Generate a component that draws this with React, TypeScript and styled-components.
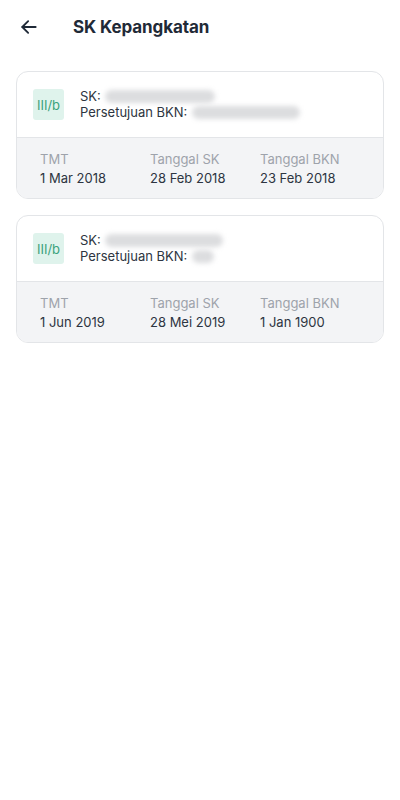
import styled, { createGlobalStyle } from "styled-components";

const GlobalStyle = createGlobalStyle`
  html, body {
    margin: 0;
    padding: 0;
    background: #ffffff;
  }
  body {
    font-family: Inter, "Noto Sans", "Liberation Sans", sans-serif;
    color: #1f2937;
  }
`;

type Entry = {
  sk: number;
  bkn: number;
  tmt: string;
  tanggalSk: string;
  tanggalBkn: string;
};

const entries: Entry[] = [
  { sk: 110, bkn: 108, tmt: "1 Mar 2018", tanggalSk: "28 Feb 2018", tanggalBkn: "23 Feb 2018" },
  { sk: 118, bkn: 22, tmt: "1 Jun 2019", tanggalSk: "28 Mei 2019", tanggalBkn: "1 Jan 1900" },
];

function App() {
  return (
    <Page>
      <GlobalStyle />
      <Header>
        <BackButton aria-label="Kembali">
          <svg width="20" height="20" viewBox="0 0 24 24" fill="none" stroke="#1f2937" strokeWidth="2.2" strokeLinecap="round" strokeLinejoin="round">
            <path d="M20 12H4" />
            <path d="M11 5l-7 7 7 7" />
          </svg>
        </BackButton>
        <Title>SK Kepangkatan</Title>
      </Header>
      <List>
        {entries.map((e, i) => (
          <Card key={i}>
            <CardTop>
              <Badge>III/b</Badge>
              <Info>
                <InfoLine>
                  SK: <Redacted style={{ width: e.sk }} />
                </InfoLine>
                <InfoLine>
                  Persetujuan BKN: <Redacted style={{ width: e.bkn }} />
                </InfoLine>
              </Info>
            </CardTop>
            <CardBottom>
              <Column>
                <Label>TMT</Label>
                <Value>{e.tmt}</Value>
              </Column>
              <Column>
                <Label>Tanggal SK</Label>
                <Value>{e.tanggalSk}</Value>
              </Column>
              <Column>
                <Label>Tanggal BKN</Label>
                <Value>{e.tanggalBkn}</Value>
              </Column>
            </CardBottom>
          </Card>
        ))}
      </List>
    </Page>
  );
}

export default App;

const Page = styled.div`
  width: 400px;
  min-height: 800px;
  background: #ffffff;
`;

const Header = styled.div`
  display: flex;
  align-items: center;
  height: 54px;
  padding: 0 0 0 18px;
`;

const BackButton = styled.div`
  display: flex;
  align-items: center;
  justify-content: center;
  width: 22px;
  height: 22px;
  margin-right: 33px;
`;

const Title = styled.h1`
  margin: 0;
  font-size: 17px;
  font-weight: 700;
  color: #1f2a37;
  letter-spacing: -0.1px;
`;

const List = styled.div`
  display: flex;
  flex-direction: column;
  gap: 16px;
  padding: 17px 16px 0 16px;
`;

const Card = styled.div`
  border: 1px solid #e3e5e8;
  border-radius: 12px;
  overflow: hidden;
  background: #ffffff;
`;

const CardTop = styled.div`
  display: flex;
  align-items: center;
  gap: 16px;
  height: 65px;
  padding: 0 16px;
`;

const Badge = styled.div`
  display: flex;
  align-items: center;
  justify-content: center;
  width: 31px;
  height: 31px;
  border-radius: 3px;
  background: #dff3ec;
  color: #3aa27c;
  font-size: 13px;
  flex-shrink: 0;
`;

const Info = styled.div`
  display: flex;
  flex-direction: column;
  gap: 1px;
`;

const InfoLine = styled.div`
  display: flex;
  align-items: center;
  font-size: 13px;
  line-height: 15px;
  color: #2d3541;
  white-space: pre;
`;

const Redacted = styled.span`
  display: inline-block;
  height: 13px;
  margin-left: 1px;
  border-radius: 7px;
  background: #dcdddf;
  filter: blur(2.5px);
`;

const CardBottom = styled.div`
  display: grid;
  grid-template-columns: 110px 110px 110px;
  padding: 13px 23px 12px 23px;
  background: #f3f4f6;
  border-top: 1px solid #e3e5e8;
`;

const Column = styled.div`
  display: flex;
  flex-direction: column;
  gap: 3px;
`;

const Label = styled.div`
  font-size: 13px;
  line-height: 16px;
  color: #9ea3ab;
`;

const Value = styled.div`
  font-size: 13px;
  line-height: 16px;
  color: #2d3541;
`;
